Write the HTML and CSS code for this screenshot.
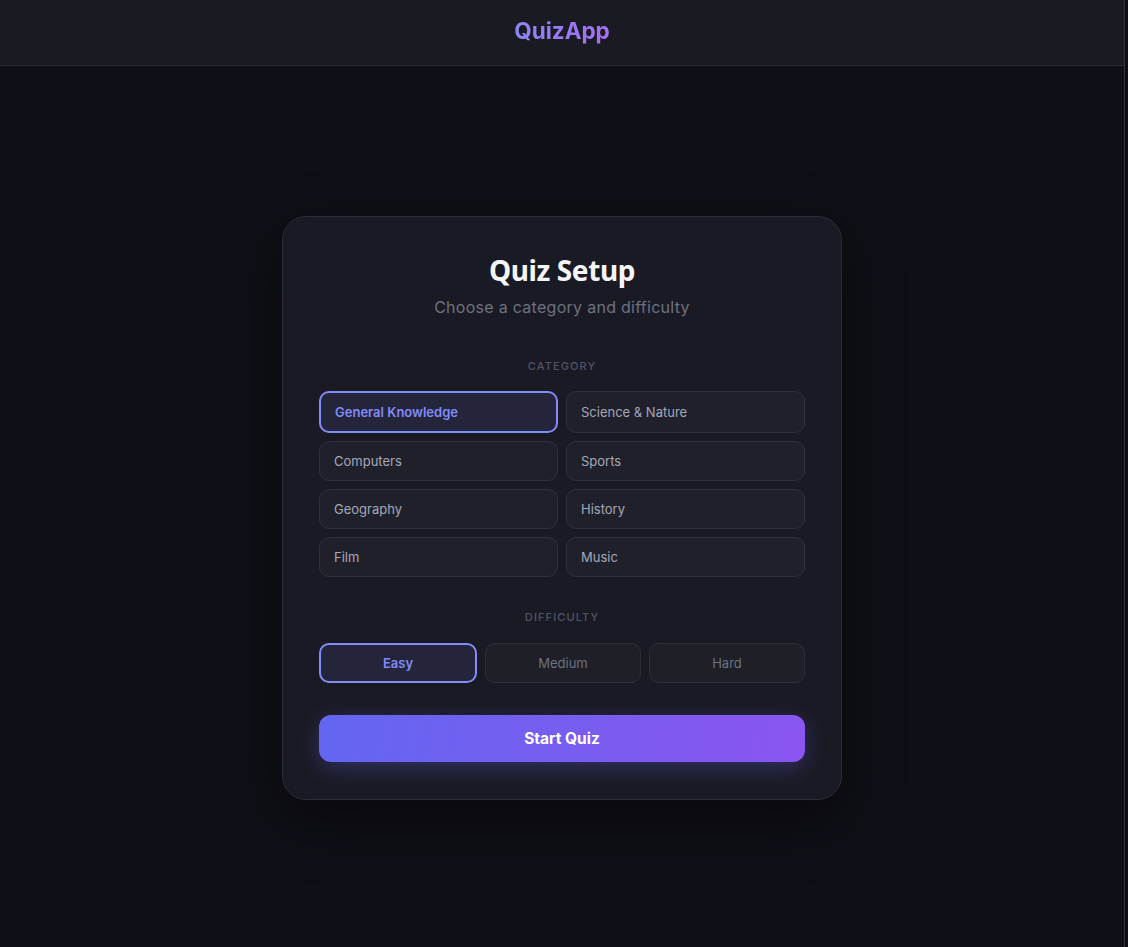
FILE: index.html
```html
<!DOCTYPE html>
<html lang="en">
<head>
    <meta charset="UTF-8">
    <meta name="viewport" content="width=device-width, initial-scale=1.0">
    <title>QuizApp</title>
    <link rel="stylesheet" href="styles.css">
</head>
<body>
    <div class="app">
        <header class="topbar">
            <span class="logo">QuizApp</span>
        </header>

        <main class="main">
            <div class="setup-card">
                <h1 class="setup-title">Quiz Setup</h1>
                <p class="setup-sub">Choose a category and difficulty</p>

                <div class="section-label">Category</div>
                <div class="category-grid">
                    <button class="option selected">General Knowledge</button>
                    <button class="option">Science &amp; Nature</button>
                    <button class="option">Computers</button>
                    <button class="option">Sports</button>
                    <button class="option">Geography</button>
                    <button class="option">History</button>
                    <button class="option">Film</button>
                    <button class="option">Music</button>
                </div>

                <div class="section-label diff-label">Difficulty</div>
                <div class="difficulty-row">
                    <button class="level selected">Easy</button>
                    <button class="level">Medium</button>
                    <button class="level">Hard</button>
                </div>

                <button class="start-btn">Start Quiz</button>
            </div>
        </main>
    </div>
</body>
</html>
```

FILE: styles.css
```css
* {
    box-sizing: border-box;
}
body {
    margin: 0;
    background-color: #0d0d13;
    font-family: Inter, "Noto Sans", sans-serif;
    color: #e5e7eb;
}
.app {
    width: calc(100% - 3px);
    min-height: 100vh;
    background-color: #0f0f17;
    border-right: 1px solid #33333f;
}
.topbar {
    height: 66px;
    padding-bottom: 4px;
    display: flex;
    align-items: center;
    justify-content: center;
    background-color: #1a1a23;
    border-bottom: 1px solid #2b2b36;
}
.logo {
    font-size: 22.5px;
    font-weight: 700;
    background: linear-gradient(90deg, #8b87f5, #a66ef4);
    -webkit-background-clip: text;
    background-clip: text;
    color: transparent;
}
.main {
    min-height: calc(100vh - 66px);
    padding-top: 2px;
    display: flex;
    align-items: center;
    justify-content: center;
}
.setup-card {
    width: 560px;
    padding: 36px 36px 37px;
    background-color: #1a1a24;
    border: 1px solid #2c2c38;
    border-radius: 24px;
    box-shadow: 0 20px 60px rgba(0, 0, 0, 0.45);
    text-align: center;
}
.setup-title {
    margin: 0 0 8px;
    font-family: "Noto Sans", sans-serif;
    font-size: 28px;
    line-height: 34px;
    font-weight: 700;
    letter-spacing: -0.4px;
    color: #f5f5f7;
}
.setup-sub {
    margin: 0 0 39px;
    font-size: 16px;
    line-height: 24px;
    letter-spacing: 0.28px;
    color: #6b7280;
}
.section-label {
    font-size: 11px;
    line-height: 16px;
    letter-spacing: 1.1px;
    text-transform: uppercase;
    font-weight: 500;
    color: #4f5563;
    margin-bottom: 17px;
}
.diff-label {
    margin-top: 32px;
    margin-bottom: 18px;
}
.category-grid {
    display: grid;
    grid-template-columns: 1fr 1fr;
    gap: 8px;
}
.option {
    font-family: inherit;
    font-size: 13px;
    line-height: 16px;
    text-align: left;
    padding: 11px 14px;
    background-color: #20202a;
    border: 1px solid #30303c;
    border-radius: 10px;
    color: #a3a8ba;
}
.option.selected,
.level.selected {
    border: 2px solid #818cf8;
    background-color: #24243a;
    color: #818cf8;
    font-weight: 600;
}
.difficulty-row {
    display: flex;
    gap: 8px;
}
.level {
    flex: 1;
    height: 40px;
    font-family: inherit;
    font-size: 13px;
    background-color: #1f1f28;
    border: 1px solid #2e2e3a;
    border-radius: 10px;
    color: #6b7280;
}
.start-btn {
    display: block;
    width: 100%;
    height: 47px;
    margin-top: 32px;
    font-family: inherit;
    font-size: 15.5px;
    font-weight: 700;
    color: #ffffff;
    border: none;
    border-radius: 12px;
    background: linear-gradient(100deg, #6366f1, #8b55f0);
    box-shadow: 0 6px 22px rgba(99, 102, 241, 0.3);
}
```
